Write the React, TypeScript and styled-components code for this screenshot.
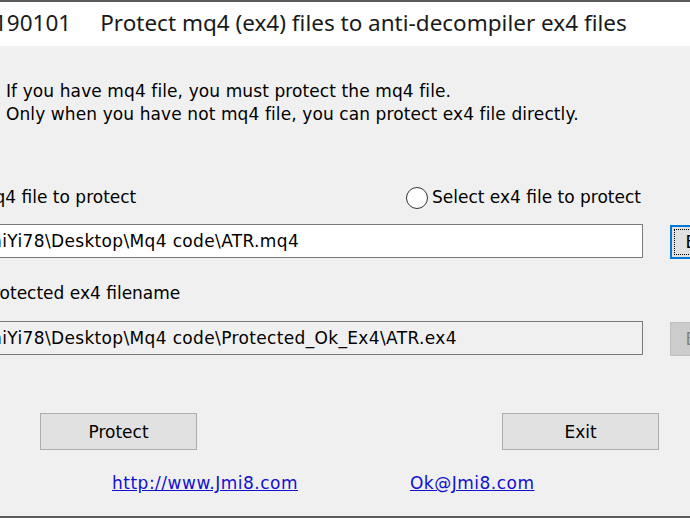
import React from "react";
import styled, { createGlobalStyle } from "styled-components";

const GlobalStyle = createGlobalStyle`
  html, body {
    margin: 0;
    padding: 0;
    width: 690px;
    height: 518px;
    overflow: hidden;
    background: #f0f0f0;
  }
`;

const Window = styled.div`
  width: 690px;
  height: 518px;
  box-sizing: border-box;
  border-top: 2px solid #5b5b5b;
  border-bottom: 2px solid #5b5b5b;
  background: #f0f0f0;
  overflow: hidden;
  display: flex;
  flex-direction: column;
  font-family: "DejaVu Sans", Verdana, sans-serif;
  font-size: 17px;
  color: #000;
`;

const TitleBar = styled.div`
  height: 44px;
  flex: none;
  box-sizing: border-box;
  padding-bottom: 3px;
  background: #fff;
  display: flex;
  align-items: center;
  gap: 29px;
  font-family: "Noto Sans", sans-serif;
  font-size: 22.5px;
  color: #1a1a1a;
  white-space: nowrap;
`;

const TitleId = styled.span`
  margin-left: -6px;
`;

const Intro = styled.div`
  margin-top: 34px;
  padding-left: 6px;
  line-height: 23px;
  white-space: nowrap;
  letter-spacing: 0.1px;
`;

const Form = styled.div`
  margin-left: -22px;
  width: 820px;
  display: grid;
  grid-template-columns: 665px 93px;
  column-gap: 27px;
  align-items: center;
`;

const LabelRow = styled.div<{ $top: number }>`
  grid-column: 1 / 2;
  margin-top: ${(p) => p.$top}px;
  display: flex;
  justify-content: space-between;
  align-items: center;
  line-height: 23px;
  white-space: nowrap;
  padding-right: 2px;
`;

const Label = styled.span<{ $indent: number }>`
  padding-left: ${(p) => p.$indent}px;
`;

const RadioOption = styled.label`
  display: flex;
  align-items: center;
  gap: 4px;
`;

const RadioCircle = styled.span`
  width: 22px;
  height: 22px;
  box-sizing: border-box;
  border: 1px solid #333;
  border-radius: 50%;
  background: #fff;
`;

const Field = styled.div<{ $top: number; $readOnly?: boolean }>`
  grid-column: 1 / 2;
  margin-top: ${(p) => p.$top}px;
  height: 34px;
  box-sizing: border-box;
  border: 1px solid #7a7a7a;
  background: ${(p) => (p.$readOnly ? "#f0f0f0" : "#fff")};
  display: flex;
  align-items: center;
  padding-left: 1px;
  letter-spacing: 0.35px;
  white-space: nowrap;
  overflow: hidden;
`;

const BrowseButton = styled.div<{ $top: number; $state: "focus" | "disabled" }>`
  grid-column: 2 / 3;
  margin-top: ${(p) => p.$top}px;
  height: 34px;
  box-sizing: border-box;
  display: flex;
  align-items: center;
  justify-content: center;
  position: relative;
  ${(p) =>
    p.$state === "focus"
      ? `
    border: 2px solid #0078d7;
    background: #e1e1e1;
    color: #000;
    &::after {
      content: "";
      position: absolute;
      inset: 2px;
      border: 1px dotted #000;
    }
  `
      : `
    border: 1px solid #bfbfbf;
    background: #cccccc;
    color: #838383;
  `}
`;

const ActionRow = styled.div`
  margin-top: 57px;
  display: flex;
  padding-left: 40px;
  gap: 305px;
`;

const PushButton = styled.div`
  width: 157px;
  height: 37px;
  box-sizing: border-box;
  border: 1px solid #adadad;
  background: #e1e1e1;
  display: flex;
  align-items: center;
  justify-content: center;
`;

const LinkRow = styled.div`
  margin-top: 22px;
  display: flex;
  padding-left: 112px;
  gap: 112px;
  line-height: 23px;
  letter-spacing: 0.5px;
`;

const Link = styled.a`
  color: #1010d0;
  text-decoration: underline;
`;

export default function App() {
  return (
    <>
      <GlobalStyle />
      <Window>
        <TitleBar>
          <TitleId>190101</TitleId>
          <span>Protect mq4 (ex4) files to anti-decompiler ex4 files</span>
        </TitleBar>
        <Intro>
          If you have mq4 file, you must protect the mq4 file.
          <br />
          Only when you have not mq4 file, you can protect ex4 file directly.
        </Intro>
        <Form>
          <LabelRow $top={60}>
            <Label $indent={0}>mq4 file to protect</Label>
            <RadioOption>
              <RadioCircle />
              Select ex4 file to protect
            </RadioOption>
          </LabelRow>
          <Field $top={14}>JmiYi78\Desktop\Mq4 code\ATR.mq4</Field>
          <BrowseButton $top={16} $state="focus">Browse</BrowseButton>
          <LabelRow $top={23}>
            <Label $indent={5}>Protected ex4 filename</Label>
          </LabelRow>
          <Field $top={15} $readOnly>JmiYi78\Desktop\Mq4 code\Protected_Ok_Ex4\ATR.ex4</Field>
          <BrowseButton $top={17} $state="disabled">Browse</BrowseButton>
        </Form>
        <ActionRow>
          <PushButton>Protect</PushButton>
          <PushButton>Exit</PushButton>
        </ActionRow>
        <LinkRow>
          <Link href="#">http://www.Jmi8.com</Link>
          <Link href="#">Ok@Jmi8.com</Link>
        </LinkRow>
      </Window>
    </>
  );
}
